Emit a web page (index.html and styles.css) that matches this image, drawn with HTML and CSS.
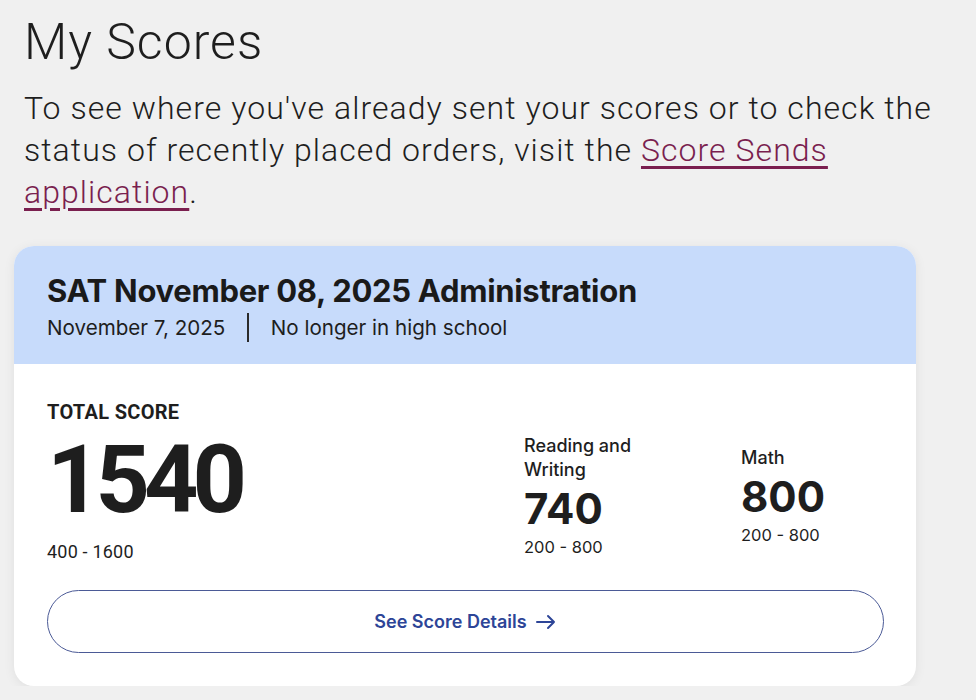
FILE: index.html
```html
<!DOCTYPE html>
<html>
<head>
<meta charset="utf-8">
<link rel="stylesheet" href="styles.css">
</head>
<body>
<main class="page">
  <h1 class="title">My Scores</h1>
  <p class="intro">To see where you've already sent your scores or to check the status of recently placed orders, visit the <a class="link" href="#">Score Sends application</a>.</p>

  <section class="card">
    <header class="card-head">
      <h2 class="admin">SAT November 08, 2025 Administration</h2>
      <div class="meta">
        <span class="meta-date">November 7, 2025</span>
        <span class="meta-sep"></span>
        <span class="meta-status">No longer in high school</span>
      </div>
    </header>
    <div class="card-body">
      <div class="scores">
        <div class="total">
          <div class="total-label">TOTAL SCORE</div>
          <div class="total-value">1540</div>
          <div class="total-range">400 - 1600</div>
        </div>
        <div class="subs">
          <div class="sub">
            <div class="sub-label">Reading and<br>Writing</div>
            <div class="sub-value">740</div>
            <div class="sub-range">200 - 800</div>
          </div>
          <div class="sub">
            <div class="sub-label">Math</div>
            <div class="sub-value">800</div>
            <div class="sub-range">200 - 800</div>
          </div>
        </div>
      </div>
      <button class="details">
        <span>See Score Details</span>
        <svg class="arrow" width="22" height="16" viewBox="0 0 22 16" fill="none" stroke="currentColor" stroke-width="2" stroke-linecap="round" stroke-linejoin="round"><path d="M2 8h17M13 2l6 6-6 6"/></svg>
      </button>
    </div>
  </section>
</main>
</body>
</html>
```

FILE: styles.css
```css
html, body {
  margin: 0;
  padding: 0;
  background: #f0f0f0;
}

body {
  font-family: Roboto, "Liberation Sans", sans-serif;
  color: #1e1e1e;
}

.page {
  padding: 12px 30px 0 24px;
}

.title {
  margin: 0;
  font-family: Roboto, sans-serif;
  font-weight: 300;
  font-size: 50px;
  line-height: 60px;
  letter-spacing: 1px;
  color: #1e1e1e;
}

.intro {
  margin: 15px 0 0;
  font-family: Roboto, sans-serif;
  font-weight: 300;
  font-size: 32px;
  line-height: 42px;
  letter-spacing: 1.05px;
  color: #1e1e1e;
}

.link {
  color: #7a1f4f;
  text-decoration: underline;
  text-decoration-thickness: 2.5px;
  text-underline-offset: 5px;
}

.card {
  margin: 33px 0 0 -10px;
  width: 902px;
  background: #ffffff;
  border-radius: 20px;
  box-shadow: 0 2px 12px rgba(0, 0, 0, 0.07);
  overflow: hidden;
}

.card-head {
  background: #c7dbfb;
  padding: 27px 33px 22px;
  font-family: Inter, sans-serif;
}

.admin {
  margin: 0;
  font-size: 31px;
  line-height: 36px;
  font-weight: 700;
  letter-spacing: -0.3px;
  color: #1a1a1a;
}

.meta {
  margin-top: 4px;
  display: flex;
  align-items: center;
  font-size: 20.6px;
  line-height: 28px;
  color: #1e1e1e;
}

.meta-sep {
  width: 1.5px;
  height: 29px;
  background: #2a2a2a;
  margin: 0 22px;
}

.card-body {
  padding: 36px 32px 33px 33px;
}

.scores {
  display: grid;
  grid-template-columns: 477px 1fr;
}

.total-label {
  font-size: 20px;
  line-height: 24px;
  font-weight: 700;
  letter-spacing: 0.3px;
}

.total-value {
  margin-top: 6px;
  font-size: 95px;
  line-height: 100px;
  font-weight: 700;
  letter-spacing: -6px;
}

.total-range {
  margin-top: 11px;
  font-size: 18px;
  line-height: 22px;
  letter-spacing: 0.2px;
}

.subs {
  margin-top: 34px;
  display: grid;
  grid-template-columns: 217px 1fr;
  align-items: center;
  align-self: start;
  font-family: Inter, sans-serif;
}

.sub-label {
  font-size: 18px;
  line-height: 24px;
  font-weight: 500;
}

.sub-value {
  margin-top: 3px;
  font-size: 42px;
  line-height: 48px;
  font-weight: 700;
}

.sub-range {
  margin-top: 3px;
  font-size: 16.5px;
  line-height: 22px;
}

.details {
  margin-top: 27px;
  width: 100%;
  height: 63px;
  display: flex;
  align-items: center;
  justify-content: center;
  gap: 8px;
  background: #ffffff;
  border: 1.5px solid #4b5a96;
  border-radius: 32px;
  font-family: Inter, sans-serif;
  font-size: 18px;
  font-weight: 600;
  color: #2d4597;
  cursor: pointer;
}

.arrow {
  display: block;
}
```
